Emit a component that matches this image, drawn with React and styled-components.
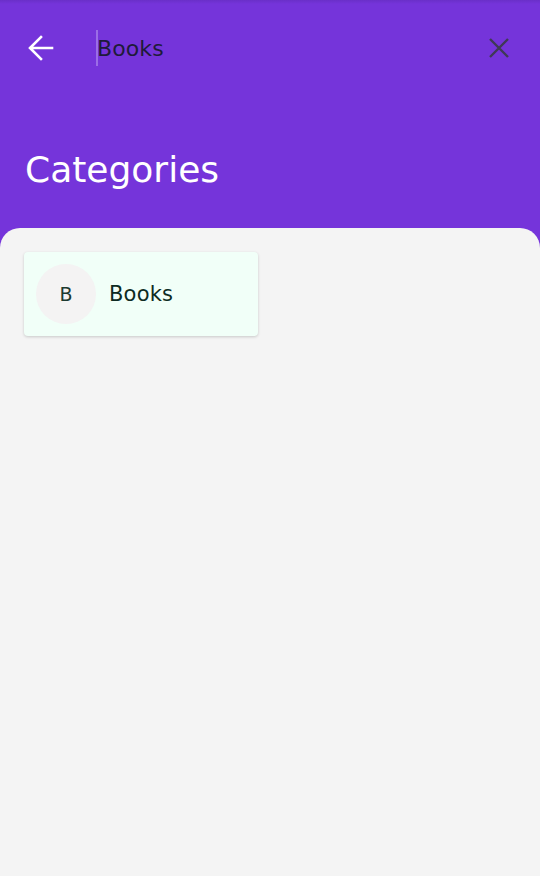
import React from "react";
import styled, { createGlobalStyle } from "styled-components";

const Global = createGlobalStyle`
  html, body { margin: 0; padding: 0; height: 100%; }
  body { font-family: "DejaVu Sans", "Noto Sans", sans-serif; background: #7534da; }
  #root { min-height: 100%; }
`;

const Page = styled.div`
  min-height: 876px;
  display: flex;
  flex-direction: column;
  background: linear-gradient(#6a2fc8 0px, #7534da 4px);
`;

const Toolbar = styled.div`
  height: 96px;
  display: flex;
  align-items: center;
  padding: 0 28px 0 28px;
  box-sizing: border-box;
`;

const IconButton = styled.button`
  border: 0;
  background: none;
  padding: 0;
  width: 26px;
  height: 26px;
  display: flex;
  align-items: center;
  justify-content: center;
  cursor: pointer;
  flex: none;
`;

const SearchField = styled.div`
  flex: 1;
  margin-left: 42px;
  height: 36px;
  display: flex;
  align-items: center;
  position: relative;
  font-size: 22px;
  color: #1e1b3a;
`;

const Caret = styled.span`
  position: absolute;
  left: 0;
  top: 0;
  width: 2px;
  height: 36px;
  background: #9b6de6;
`;

const SearchText = styled.span`
  padding-left: 1px;
  letter-spacing: 0.1px;
`;

const Title = styled.h1`
  margin: 0;
  padding: 54px 24px 0 25px;
  font-weight: 400;
  font-size: 36px;
  line-height: 40px;
  color: #ffffff;
`;

const Sheet = styled.div`
  flex: 1;
  margin-top: 38px;
  background: #f4f4f4;
  border-radius: 20px 20px 0 0;
  padding: 24px;
  display: flex;
  flex-wrap: wrap;
  align-content: flex-start;
  gap: 16px;
`;

const Card = styled.div`
  width: 234px;
  height: 84px;
  box-sizing: border-box;
  padding: 12px;
  display: flex;
  align-items: center;
  gap: 13px;
  background: #f1fff8;
  border-radius: 4px;
  box-shadow: 0 1px 3px rgba(0, 0, 0, 0.18);
`;

const Avatar = styled.div`
  width: 60px;
  height: 60px;
  border-radius: 50%;
  background: #f4f3f3;
  display: flex;
  align-items: center;
  justify-content: center;
  font-size: 19px;
  color: #1c3a30;
  flex: none;
`;

const CardLabel = styled.span`
  font-size: 21px;
  color: #0d2b22;
  letter-spacing: 0.2px;
`;

const BackIcon = () => (
  <svg width="26" height="26" viewBox="0 0 26 26" fill="none">
    <path d="M24 13H2.5M13 2L2 13l11 11" stroke="#fff" strokeWidth="2.6" strokeLinecap="square" />
  </svg>
);

const CloseIcon = () => (
  <svg width="24" height="24" viewBox="0 0 24 24" fill="none">
    <path d="M3 3l18 18M21 3L3 21" stroke="#3f3a55" strokeWidth="2.4" />
  </svg>
);

export default function App() {
  return (
    <>
      <Global />
      <Page>
        <Toolbar>
          <IconButton aria-label="Back"><BackIcon /></IconButton>
          <SearchField>
            <Caret />
            <SearchText>Books</SearchText>
          </SearchField>
          <IconButton aria-label="Clear"><CloseIcon /></IconButton>
        </Toolbar>
        <Title>Categories</Title>
        <Sheet>
          <Card>
            <Avatar>B</Avatar>
            <CardLabel>Books</CardLabel>
          </Card>
        </Sheet>
      </Page>
    </>
  );
}
